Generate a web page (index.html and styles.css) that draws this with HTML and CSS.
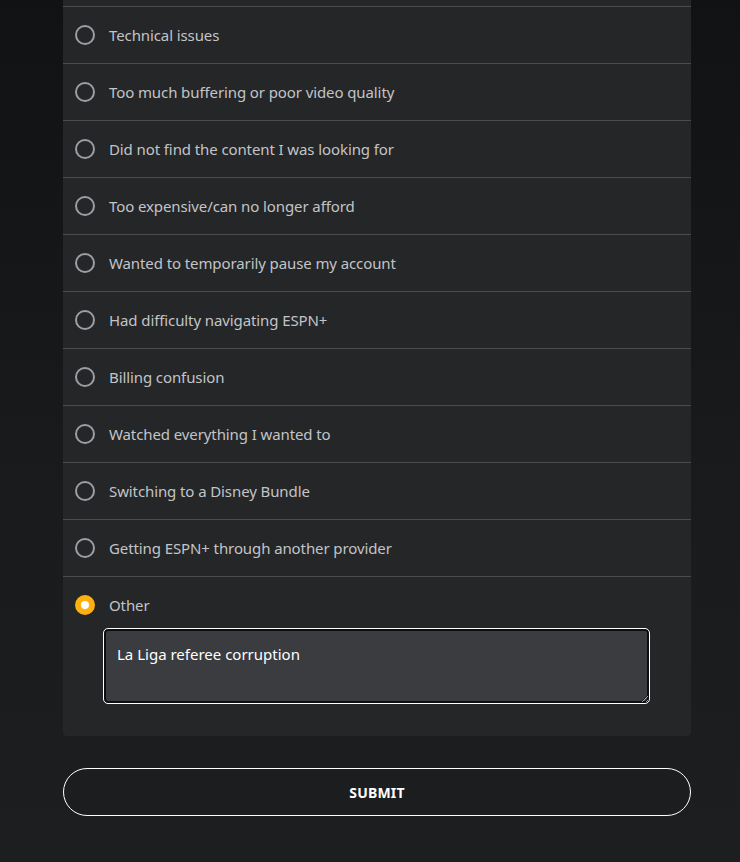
FILE: index.html
```html
<!DOCTYPE html>
<html lang="en">
<head>
<meta charset="utf-8">
<title>Cancel reason</title>
<link rel="stylesheet" href="styles.css">
</head>
<body>
<main class="page">
  <form class="survey">
    <div class="card">
      <ul class="options">
        <li class="option"><span class="radio"></span><span class="label">Technical issues</span></li>
        <li class="option"><span class="radio"></span><span class="label">Too much buffering or poor video quality</span></li>
        <li class="option"><span class="radio"></span><span class="label">Did not find the content I was looking for</span></li>
        <li class="option"><span class="radio"></span><span class="label">Too expensive/can no longer afford</span></li>
        <li class="option"><span class="radio"></span><span class="label">Wanted to temporarily pause my account</span></li>
        <li class="option"><span class="radio"></span><span class="label">Had difficulty navigating ESPN+</span></li>
        <li class="option"><span class="radio"></span><span class="label">Billing confusion</span></li>
        <li class="option"><span class="radio"></span><span class="label">Watched everything I wanted to</span></li>
        <li class="option"><span class="radio"></span><span class="label">Switching to a Disney Bundle</span></li>
        <li class="option"><span class="radio"></span><span class="label">Getting ESPN+ through another provider</span></li>
        <li class="option option-other">
          <div class="other-head"><span class="radio radio-checked"></span><span class="label">Other</span></div>
          <div class="other-field"><textarea class="other-input">La Liga referee corruption</textarea></div>
        </li>
      </ul>
    </div>
    <button type="button" class="submit">SUBMIT</button>
  </form>
</main>
</body>
</html>
```
FILE: styles.css
```css
html, body {
  margin: 0;
  padding: 0;
}
body {
  min-height: 862px;
  background: linear-gradient(180deg, #111214 0%, #1a1b1d 60%, #1d1e20 100%);
  font-family: "Noto Sans", "Open Sans", sans-serif;
  color: #c5c6c8;
}
.page {
  width: 628px;
  margin-left: 63px;
}
.survey {
  display: flex;
  flex-direction: column;
}
.card {
  background: #252628;
  border-radius: 0 0 4px 4px;
  padding-top: 6px;
  padding-bottom: 32px;
}
.options {
  list-style: none;
  margin: 0;
  padding: 0;
}
.option {
  display: flex;
  align-items: center;
  height: 56px;
  border-top: 1px solid #4b4c4f;
  padding-left: 12px;
  gap: 14px;
}
.option-other {
  display: block;
  height: auto;
  padding-top: 0;
}
.other-head {
  display: flex;
  align-items: center;
  gap: 14px;
  height: 56px;
}
.radio {
  box-sizing: border-box;
  width: 20px;
  height: 20px;
  border-radius: 50%;
  border: 2px solid #9a9ea5;
  flex: none;
}
.radio-checked {
  border: 6.5px solid #fdb010;
  background: #ffffff;
}
.label {
  font-size: 15px;
  color: #c2c4c7;
  letter-spacing: -0.1px;
}
.other-field {
  margin: -5px 41px 0 28px;
}
.other-input {
  display: block;
  box-sizing: border-box;
  width: 100%;
  height: 76px;
  margin: 0;
  resize: vertical;
  background: #3b3c3f;
  color: #ffffff;
  border: 1px solid #ffffff;
  box-shadow: inset 0 0 0 2px #0e0e10;
  border-radius: 5px;
  padding: 14px 13px;
  font-family: "Noto Sans", "Open Sans", sans-serif;
  font-size: 15px;
  line-height: 22px;
  outline: none;
}
.submit {
  margin-top: 32px;
  height: 48px;
  border-radius: 24px;
  border: 1px solid #ffffff;
  background: transparent;
  color: #ffffff;
  font-family: "Noto Sans", "Open Sans", sans-serif;
  font-size: 14px;
  font-weight: 700;
  letter-spacing: 0.2px;
  cursor: pointer;
}
```
